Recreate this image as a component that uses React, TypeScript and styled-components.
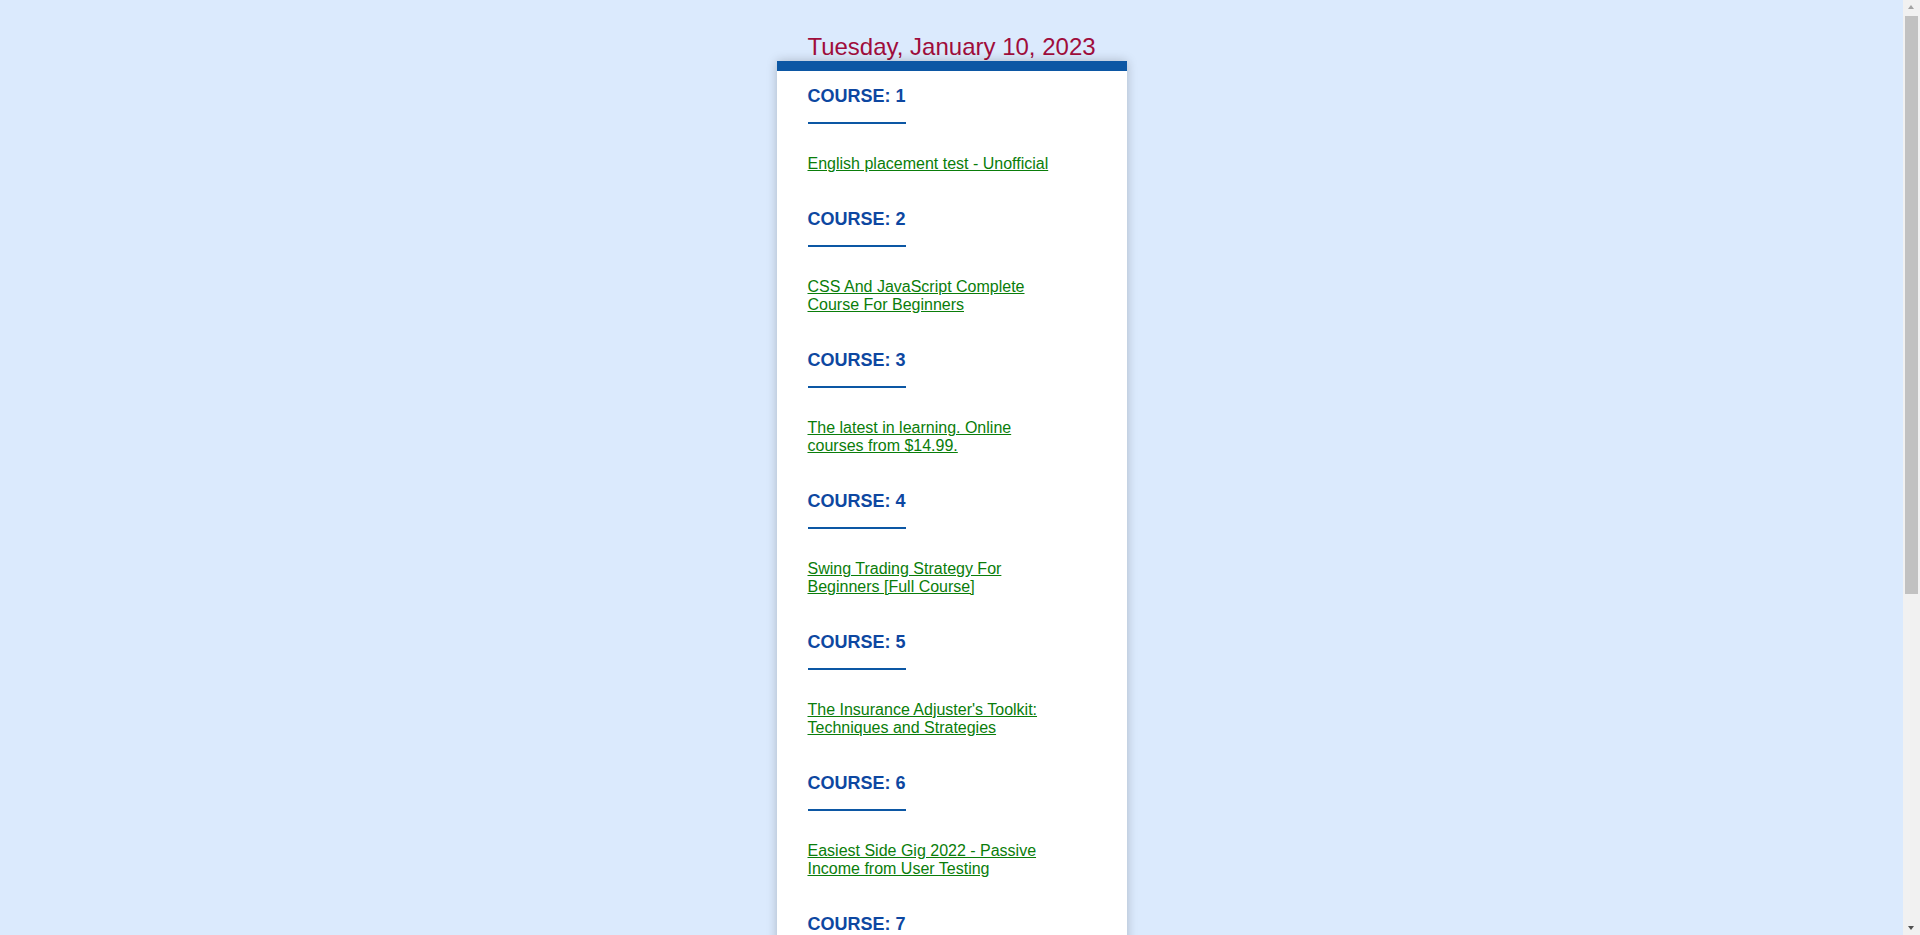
import React from "react";
import styled, { createGlobalStyle } from "styled-components";

const GlobalStyle = createGlobalStyle`
  html, body {
    margin: 0;
    padding: 0;
  }
  html {
    scrollbar-width: none;
  }
  body {
    background: #dbeafd;
    font-family: "Liberation Sans", Arial, sans-serif;
  }
`;

const Page = styled.main`
  display: flex;
  flex-direction: column;
  align-items: center;
  padding-right: 17px;
`;

const DateTitle = styled.h2`
  margin: 0;
  padding-top: 32px;
  font-size: 24px;
  line-height: 29px;
  font-weight: 400;
  color: #a00d3b;
  text-align: center;
`;

const Card = styled.section`
  width: 350px;
  box-sizing: border-box;
  background: #ffffff;
  border-top: 10px solid #0c57a4;
  box-shadow: 0 0 10px rgba(0, 0, 0, 0.22);
  padding: 15px 31px 22px;
  display: flex;
  flex-direction: column;
  gap: 36px;
`;

const Course = styled.article`
  display: flex;
  flex-direction: column;
  align-items: flex-start;
`;

const CourseTitle = styled.h3`
  margin: 0;
  font-size: 18px;
  line-height: 21px;
  font-weight: 700;
  color: #0d47a1;
`;

const Rule = styled.hr`
  margin: 15px 0 31px;
  width: 98px;
  height: 2px;
  border: 0;
  background: #0c57a4;
`;

const CourseLink = styled.a`
  max-width: 250px;
  font-size: 16px;
  line-height: 18px;
  color: #0a7d0a;
  text-decoration: underline;
`;

/* the window scrollbar seen in the screenshot */
const ScrollTrack = styled.div`
  position: fixed;
  top: 0;
  right: 0;
  width: 17px;
  height: 100vh;
  background: #f1f1f1;
`;

const ScrollThumb = styled.div`
  position: absolute;
  top: 16px;
  left: 2px;
  width: 13px;
  height: 578px;
  background: #c1c1c1;
`;

const Arrow = styled.div<{ $down?: boolean }>`
  position: absolute;
  left: 5px;
  ${(p) => (p.$down ? "bottom: 5px;" : "top: 5px;")}
  width: 0;
  height: 0;
  border-left: 3.5px solid transparent;
  border-right: 3.5px solid transparent;
  ${(p) =>
    p.$down ? "border-top: 4px solid #505050;" : "border-bottom: 4px solid #a3a3a3;"}
`;

const courses = [
  "English placement test - Unofficial",
  "CSS And JavaScript Complete Course For Beginners",
  "The latest in learning. Online courses from $14.99.",
  "Swing Trading Strategy For Beginners [Full Course]",
  "The Insurance Adjuster's Toolkit: Techniques and Strategies",
  "Easiest Side Gig 2022 - Passive Income from User Testing",
  "Python For Beginners - Learn Programming From Scratch",
  "Microsoft Excel - Excel From Beginner To Advanced",
  "Complete Web Design: From Figma To Webflow",
  "Digital Marketing Masterclass - 23 Courses in 1",
];

export default function App() {
  return (
    <>
      <GlobalStyle />
      <Page>
        <DateTitle>Tuesday, January 10, 2023</DateTitle>
        <Card>
          {courses.map((title, i) => (
            <Course key={i}>
              <CourseTitle>COURSE: {i + 1}</CourseTitle>
              <Rule />
              <CourseLink href="#">{title}</CourseLink>
            </Course>
          ))}
        </Card>
      </Page>
      <ScrollTrack>
        <Arrow />
        <ScrollThumb />
        <Arrow $down />
      </ScrollTrack>
    </>
  );
}
